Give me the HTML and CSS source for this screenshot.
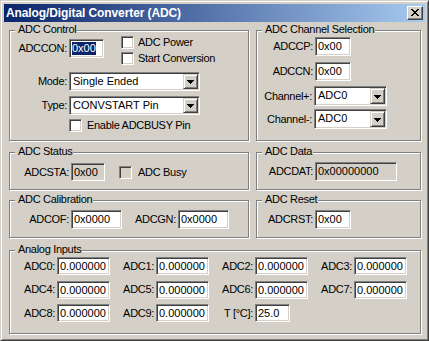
FILE: index.html
```html
<!DOCTYPE html>
<html>
<head>
<meta charset="utf-8">
<title>Analog/Digital Converter (ADC)</title>
<link rel="stylesheet" href="styles.css">
</head>
<body>
<div class="window">
  <div class="titlebar">
    <span class="title">Analog/Digital Converter (ADC)</span>
    <span class="close"><svg width="8" height="7" viewBox="0 0 8 7" shape-rendering="crispEdges"><path d="M0 0h2v1H0zM6 0h2v1H6zM1 1h2v1H1zM5 1h2v1H5zM2 2h4v1H2zM3 3h2v1H3zM2 4h4v1H2zM1 5h2v1H1zM5 5h2v1H5zM0 6h2v1H0zM6 6h2v1H6z" fill="#000"/></svg></span>
  </div>
  <div class="client">
    <div class="group g-control">
      <span class="legend">ADC Control</span>
      <div class="ctl-top">
        <div class="field f-adccon">
          <span class="lbl w57">ADCCON:</span>
          <span class="edit e-35"><span class="sel">0x00</span></span>
        </div>
        <div class="checks">
          <div class="check"><span class="cb"></span><span class="cl">ADC Power</span></div>
          <div class="check"><span class="cb"></span><span class="cl">Start Conversion</span></div>
        </div>
      </div>
      <div class="field f-mode">
        <span class="lbl w57">Mode:</span>
        <span class="combo c-131"><span class="val">Single Ended</span><span class="dd"><svg width="7" height="4" viewBox="0 0 7 4" shape-rendering="crispEdges"><path d="M0 0h7v1H0zM1 1h5v1H1zM2 2h3v1H2zM3 3h1v1H3z" fill="#000"/></svg></span></span>
      </div>
      <div class="field f-type">
        <span class="lbl w57">Type:</span>
        <span class="combo c-131"><span class="val">CONVSTART Pin</span><span class="dd"><svg width="7" height="4" viewBox="0 0 7 4" shape-rendering="crispEdges"><path d="M0 0h7v1H0zM1 1h5v1H1zM2 2h3v1H2zM3 3h1v1H3z" fill="#000"/></svg></span></span>
      </div>
      <div class="check c-busy"><span class="cb"></span><span class="cl cl5">Enable ADCBUSY Pin</span></div>
    </div>

    <div class="group g-chan">
      <span class="legend">ADC Channel Selection</span>
      <div class="field f-adccp">
        <span class="lbl w56">ADCCP:</span>
        <span class="edit e-36">0x00</span>
      </div>
      <div class="field f-adccn">
        <span class="lbl w56">ADCCN:</span>
        <span class="edit e-36">0x00</span>
      </div>
      <div class="field f-chp">
        <span class="lbl w55">Channel+:</span>
        <span class="combo c-73"><span class="val">ADC0</span><span class="dd"><svg width="7" height="4" viewBox="0 0 7 4" shape-rendering="crispEdges"><path d="M0 0h7v1H0zM1 1h5v1H1zM2 2h3v1H2zM3 3h1v1H3z" fill="#000"/></svg></span></span>
      </div>
      <div class="field f-chm">
        <span class="lbl w55">Channel-:</span>
        <span class="combo c-73"><span class="val">ADC0</span><span class="dd"><svg width="7" height="4" viewBox="0 0 7 4" shape-rendering="crispEdges"><path d="M0 0h7v1H0zM1 1h5v1H1zM2 2h3v1H2zM3 3h1v1H3z" fill="#000"/></svg></span></span>
      </div>
    </div>

    <div class="group g-status">
      <span class="legend">ADC Status</span>
      <div class="field f-row">
        <span class="lbl w59">ADCSTA:</span>
        <span class="edit ro e-34">0x00</span>
        <div class="check c-adcbusy"><span class="cb dis"></span><span class="cl cl6">ADC Busy</span></div>
      </div>
    </div>

    <div class="group g-data">
      <span class="legend">ADC Data</span>
      <div class="field f-row">
        <span class="lbl w56">ADCDAT:</span>
        <span class="edit ro e-82">0x00000000</span>
      </div>
    </div>

    <div class="group g-cal">
      <span class="legend">ADC Calibration</span>
      <div class="field f-row">
        <span class="lbl w59">ADCOF:</span>
        <span class="edit e-51">0x0000</span>
        <span class="lbl w54">ADCGN:</span>
        <span class="edit e-51">0x0000</span>
      </div>
    </div>

    <div class="group g-reset">
      <span class="legend">ADC Reset</span>
      <div class="field f-row">
        <span class="lbl w56">ADCRST:</span>
        <span class="edit e-36">0x00</span>
      </div>
    </div>

    <div class="group g-analog">
      <span class="legend">Analog Inputs</span>
      <div class="ai-grid">
        <div class="ai"><span class="lbl w45">ADC0:</span><span class="edit e-53">0.000000</span></div>
        <div class="ai"><span class="lbl w45">ADC1:</span><span class="edit e-53">0.000000</span></div>
        <div class="ai"><span class="lbl w45">ADC2:</span><span class="edit e-53">0.000000</span></div>
        <div class="ai"><span class="lbl w45">ADC3:</span><span class="edit e-53">0.000000</span></div>
        <div class="ai"><span class="lbl w45">ADC4:</span><span class="edit e-53">0.000000</span></div>
        <div class="ai"><span class="lbl w45">ADC5:</span><span class="edit e-53">0.000000</span></div>
        <div class="ai"><span class="lbl w45">ADC6:</span><span class="edit e-53">0.000000</span></div>
        <div class="ai"><span class="lbl w45">ADC7:</span><span class="edit e-53">0.000000</span></div>
        <div class="ai"><span class="lbl w45">ADC8:</span><span class="edit e-53">0.000000</span></div>
        <div class="ai"><span class="lbl w45">ADC9:</span><span class="edit e-53">0.000000</span></div>
        <div class="ai"><span class="lbl w45">T [°C]:</span><span class="edit e-35">25.0</span></div>
      </div>
    </div>
  </div>
</div>
</body>
</html>
```

FILE: styles.css
```css
* { box-sizing: border-box; }
html, body { margin: 0; padding: 0; background: #d4d0c8; }
body {
  font-family: "Liberation Sans", Arial, sans-serif;
  font-size: 11px;
  line-height: 13px;
  color: #000;
}
.window {
  width: 429px;
  height: 341px;
  background: #d4d0c8;
  border: 1px solid;
  border-color: #d4d0c8 #404040 #404040 #d4d0c8;
  box-shadow: inset 1px 1px 0 #fff, inset -1px -1px 0 #808080;
  padding: 3px;
  display: flex;
  flex-direction: column;
}
.titlebar {
  height: 18px;
  background: linear-gradient(to right, #0a246a, #a6caf0);
  display: flex;
  align-items: flex-start;
  justify-content: space-between;
}
.title {
  color: #fff;
  font-weight: bold;
  font-size: 12px;
  line-height: 18px;
  padding-left: 2px;
  letter-spacing: -0.1px;
}
.close {
  width: 16px;
  height: 14px;
  margin: 2px 2px 0 0;
  background: #d4d0c8;
  border: 1px solid;
  border-color: #fff #404040 #404040 #fff;
  box-shadow: inset -1px -1px 0 #808080;
  display: flex;
  align-items: center;
  justify-content: center;
  padding: 0 1px 1px 0;
}
.close svg { display: block; }

.client {
  display: grid;
  grid-template-columns: 240px 165px;
  column-gap: 7px;
  padding: 0 0 0 5px;
  letter-spacing: -0.3px;
}
.group {
  position: relative;
  border: 1px solid #808080;
  box-shadow: 1px 1px 0 #fff, inset 1px 1px 0 #fff;
}
.legend {
  position: absolute;
  top: -8px;
  left: 5px;
  background: #d4d0c8;
  padding: 0 1px 0 3px;
  line-height: 13px;
  white-space: nowrap;
}
.g-control, .g-chan { margin-top: 8px; height: 111px; }
.g-status, .g-data { margin-top: 11px; height: 38px; }
.g-cal, .g-reset { margin-top: 10px; height: 38px; }
.g-analog { grid-column: 1 / 3; margin-top: 12px; height: 84px; }

.field { display: flex; align-items: center; }
.lbl { text-align: right; margin-right: 2px; white-space: nowrap; flex: none; }
.w45 { width: 45px; }
.w54 { width: 54px; }
.w55 { width: 55px; }
.w56 { width: 56px; }
.w57 { width: 57px; }
.w59 { width: 59px; }

.edit {
  display: block;
  flex: none;
  height: 19px;
  background: #fff;
  border: 1px solid;
  border-color: #808080 #fff #fff #808080;
  box-shadow: inset 1px 1px 0 #404040, inset -1px -1px 0 #d4d0c8;
  padding: 0 0 0 2px;
  line-height: 17px;
  letter-spacing: 0;
  white-space: nowrap;
  overflow: hidden;
}
.edit.ro { background: #d4d0c8; }
.sel { background: #0a246a; color: #fff; display: inline-block; line-height: 13px; }
.e-34 { width: 34px; }
.e-35 { width: 35px; }
.e-36 { width: 36px; }
.e-51 { width: 51px; }
.e-53 { width: 53px; }
.e-82 { width: 82px; }

.combo {
  display: flex;
  flex: none;
  height: 19px;
  background: #fff;
  border: 1px solid;
  border-color: #808080 #fff #fff #808080;
  box-shadow: inset 1px 1px 0 #404040, inset -1px -1px 0 #d4d0c8;
  padding: 1px;
}
.c-131 { width: 131px; }
.c-73 { width: 73px; height: 20px; }
.combo .val { flex: 1; padding-left: 2px; line-height: 15px; white-space: nowrap; letter-spacing: 0; }
.combo .dd {
  width: 15px;
  flex: none;
  background: #d4d0c8;
  border: 1px solid;
  border-color: #d4d0c8 #404040 #404040 #d4d0c8;
  box-shadow: inset 1px 1px 0 #fff, inset -1px -1px 0 #808080;
  display: flex;
  align-items: center;
  justify-content: center;
  padding-top: 1px;
}
.combo .dd svg { display: block; }

.check { display: flex; align-items: center; height: 13px; }
.cb {
  width: 13px;
  height: 13px;
  flex: none;
  background: #fff;
  border: 1px solid;
  border-color: #808080 #fff #fff #808080;
  box-shadow: inset 1px 1px 0 #404040, inset -1px -1px 0 #d4d0c8;
}
.cb.dis { background: #d4d0c8; }
.cl { margin-left: 4px; white-space: nowrap; }
.cl5 { margin-left: 5px; }
.cl6 { margin-left: 6px; }

/* ADC Control */
.ctl-top { display: flex; align-items: flex-start; margin-top: 5px; }
.f-adccon { margin-top: 3px; }
.checks { margin-left: 17px; display: flex; flex-direction: column; gap: 3px; }
.f-mode { margin-top: 7px; }
.f-type { margin-top: 5px; }
.c-busy { margin: 4px 0 0 59px; }

/* Channel selection */
.f-adccp { margin-top: 6px; }
.f-adccn { margin-top: 6px; }
.f-chp { margin-top: 5px; }
.f-chm { margin-top: 3px; }
.f-chp .combo, .f-chm .combo { margin-left: 0; }

/* Single-row groups */
.f-row { margin-top: 9px; }
.g-status .f-row { margin-top: 10px; }
.g-status .edit { height: 18px; line-height: 16px; }
.c-adcbusy { margin-left: 14px; }

/* Analog inputs */
.ai-grid {
  display: grid;
  grid-template-columns: repeat(4, 99px);
  grid-auto-rows: 18px;
  row-gap: 5.5px;
  margin-top: 6px;
}
.ai { display: flex; align-items: center; }
.ai .edit { height: 18px; line-height: 16px; }
```
